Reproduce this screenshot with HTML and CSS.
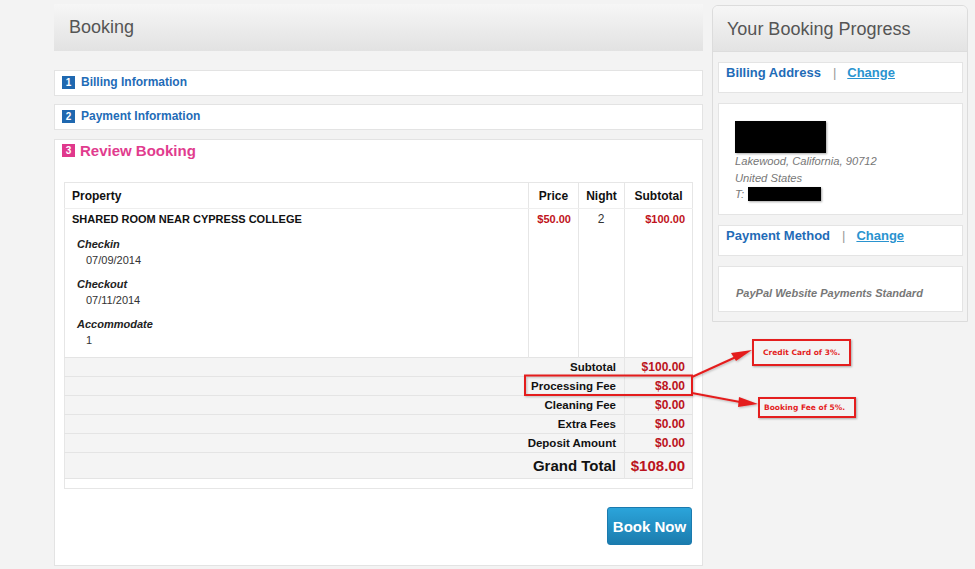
FILE: index.html
```html
<!DOCTYPE html>
<html>
<head>
<meta charset="utf-8">
<link rel="stylesheet" href="styles.css">
</head>
<body>
<div class="page">
  <main class="main">
    <div class="bar"><h1 class="bar-title">Booking</h1></div>
    <div class="step step-first"><span class="num">1</span>Billing Information</div>
    <div class="step"><span class="num">2</span>Payment Information</div>
    <section class="review">
      <div class="review-title"><span class="num num-pink">3</span>Review Booking</div>
      <table class="cart">
        <colgroup><col class="c1"><col class="c2"><col class="c3"><col class="c4"></colgroup>
        <thead>
          <tr><th class="th-left">Property</th><th>Price</th><th>Night</th><th>Subtotal</th></tr>
        </thead>
        <tbody>
          <tr class="item">
            <td class="prop">
              <div class="prop-name">SHARED ROOM NEAR CYPRESS COLLEGE</div>
              <dl class="details">
                <dt>Checkin</dt><dd>07/09/2014</dd>
                <dt>Checkout</dt><dd>07/11/2014</dd>
                <dt>Accommodate</dt><dd>1</dd>
              </dl>
            </td>
            <td class="money">$50.00</td>
            <td class="center">2</td>
            <td class="money">$100.00</td>
          </tr>
          <tr class="tot"><td colspan="3" class="tl">Subtotal</td><td class="tv">$100.00</td></tr>
          <tr class="tot"><td colspan="3" class="tl">Processing Fee</td><td class="tv">$8.00</td></tr>
          <tr class="tot"><td colspan="3" class="tl">Cleaning Fee</td><td class="tv">$0.00</td></tr>
          <tr class="tot"><td colspan="3" class="tl">Extra Fees</td><td class="tv">$0.00</td></tr>
          <tr class="tot"><td colspan="3" class="tl">Deposit Amount</td><td class="tv">$0.00</td></tr>
          <tr class="tot grand"><td colspan="3" class="tl">Grand Total</td><td class="tv">$108.00</td></tr>
          <tr class="empty"><td colspan="4"></td></tr>
        </tbody>
      </table>
      <div class="actions"><button class="book">Book Now</button></div>
    </section>
  </main>

  <aside class="side">
    <div class="side-bar"><h2 class="side-title">Your Booking Progress</h2></div>
    <div class="box box-head"><span class="bh">Billing Address</span><span class="sep">|</span><a class="change">Change</a></div>
    <div class="box box-addr">
      <div class="redact redact-name"></div>
      <div class="addr">Lakewood, California, 90712</div>
      <div class="addr">United States</div>
      <div class="addr">T: <span class="redact redact-phone"></span></div>
    </div>
    <div class="box box-head"><span class="bh">Payment Method</span><span class="sep">|</span><a class="change">Change</a></div>
    <div class="box box-pay">PayPal Website Payments Standard</div>
  </aside>
</div>

<svg class="overlay" width="975" height="569" viewBox="0 0 975 569">
  <defs>
    <filter id="sh" x="-20%" y="-20%" width="140%" height="140%">
      <feDropShadow dx="1" dy="1" stdDeviation="1" flood-color="#000" flood-opacity="0.25"/>
    </filter>
  </defs>
  <g filter="url(#sh)">
    <rect x="525" y="375.5" width="167" height="19.5" fill="none" stroke="#e41e1e" stroke-width="2"/>
    <line x1="692" y1="377" x2="736" y2="357" stroke="#e41e1e" stroke-width="2"/>
    <polygon points="752,350 731,353 736,361" fill="#e41e1e"/>
    <line x1="692" y1="393" x2="740" y2="402" stroke="#e41e1e" stroke-width="2"/>
    <polygon points="758,404 739,397 738,407" fill="#e41e1e"/>
  </g>
</svg>
<div class="note note-cc">Credit Card of 3%.</div>
<div class="note note-bf">Booking Fee of 5%.</div>
</body>
</html>
```

FILE: styles.css
```css
* { box-sizing: border-box; }
html, body { margin: 0; padding: 0; }
body {
  background: #f3f3f3;
  font-family: "Liberation Sans", Arial, sans-serif;
  color: #222;
  width: 975px;
  height: 569px;
  overflow: hidden;
  position: relative;
}
.page {
  display: flex;
  align-items: flex-start;
  gap: 9px;
  padding: 4px 0 0 54px;
}
.main { width: 649px; }

.bar {
  height: 47px;
  background: linear-gradient(#f6f6f6, #e2e2e2);
  padding-left: 15px;
}
.bar-title {
  margin: 0;
  font-weight: normal;
  font-size: 18px;
  line-height: 47px;
  color: #555;
}

.step {
  display: flex;
  align-items: center;
  height: 26px;
  margin-top: 8px;
  padding: 0 0 2px 7px;
  background: #fff;
  border: 1px solid #e3e3e3;
  font-size: 12px;
  font-weight: bold;
  color: #1f6cb7;
}
.step-first { margin-top: 19px; }
.num {
  display: inline-flex;
  align-items: center;
  justify-content: center;
  width: 13px;
  height: 13px;
  margin-right: 6px;
  background: #1f68b0;
  color: #fff;
  font-size: 10px;
  font-weight: bold;
}
.num-pink { background: #e0388c; margin-right: 5px; }

.review {
  margin-top: 9px;
  background: #fff;
  border: 1px solid #e3e3e3;
  padding: 0 10px 20px 9px;
}
.review-title {
  display: flex;
  align-items: center;
  height: 20px;
  margin: 0 0 0 -2px;
  font-size: 15px;
  font-weight: bold;
  color: #e13c8e;
}

.cart {
  margin-top: 22px;
  width: 628px;
  table-layout: fixed;
  border-collapse: collapse;
  border: 1px solid #e6e6e6;
  font-size: 12px;
}
.c1 { width: 464px; }
.c2 { width: 50px; }
.c3 { width: 46px; }
.c4 { width: 68px; }
.cart th {
  height: 26px;
  padding: 0 2px;
  font-weight: bold;
  color: #111;
  text-align: center;
  border-left: 1px solid #e6e6e6;
  border-bottom: 1px solid #eeeeee;
}
.cart th.th-left { text-align: left; padding-left: 7px; border-left: none; }
.item td {
  vertical-align: top;
  border-left: 1px solid #e6e6e6;
  padding: 4px 8px 8px 7px;
  line-height: 13px;
  font-size: 11px;
}
.item td.prop { border-left: none; }
.item td.money { text-align: right; color: #bf1320; font-weight: bold; padding-right: 7px; padding-left: 2px; }
.item td.center { text-align: center; color: #333; font-size: 12px; }
.prop-name { font-weight: bold; color: #111; font-size: 11px; }
.details { margin: 10px 0 0 5px; }
.details dt { font-style: italic; font-weight: bold; color: #222; line-height: 16px; margin-top: 7px; }
.details dt:first-child { margin-top: 0; }
.details dd { margin: 0 0 0 9px; line-height: 17px; color: #333; }

.tot td {
  height: 19px;
  padding: 0 8px 0 4px;
  background: #f4f4f4;
  border-top: 1px solid #e4e4e4;
  text-align: right;
  font-size: 11.5px;
  font-weight: bold;
  line-height: 18px;
}
.tot td.tl { color: #111; }
.tot td.tv { color: #bb1320; border-left: 1px solid #e6e6e6; padding-right: 7px; font-size: 12px; }
.tot.grand td { height: 26px; font-size: 15px; }
.tot.grand td.tv { font-size: 15px; }
.empty td { height: 10px; background: #fff; border-top: 1px solid #e4e4e4; padding: 0; }

.actions { display: flex; justify-content: flex-end; margin-top: 18px; }
.book {
  width: 85px;
  height: 38px;
  border: 1px solid #1b7aae;
  border-radius: 3px;
  background: linear-gradient(#2ba4da, #1b7cae);
  color: #fff;
  font-family: "Liberation Sans", Arial, sans-serif;
  font-size: 15px;
  font-weight: bold;
  padding: 0;
}

.side {
  width: 256px;
  margin-top: 1px;
  background: #f3f3f3;
  border: 1px solid #dcdcdc;
  border-radius: 6px 6px 0 0;
  padding-bottom: 9px;
  overflow: hidden;
}
.side-bar {
  height: 46px;
  background: linear-gradient(#f6f6f6, #e3e3e3);
  border-bottom: 1px solid #dddddd;
  padding-left: 14px;
}
.side-title {
  margin: 0;
  font-weight: normal;
  font-size: 18px;
  line-height: 46px;
  color: #555;
}
.box {
  margin: 10px 4px 0 5px;
  background: #fff;
  border: 1px solid #e4e4e4;
}
.box-head {
  height: 31px;
  padding: 2px 0 0 7px;
  font-size: 13px;
  font-weight: bold;
  line-height: 16px;
}
.bh { color: #1f6cb7; }
.sep { color: #999; font-weight: normal; margin: 0 11px 0 12px; }
.change { color: #2a93cf; text-decoration: underline; }
.box-addr {
  height: 112px;
  padding: 17px 0 0 16px;
}
.redact { background: #000; box-shadow: 1px 1px 2px rgba(0,0,0,0.35); }
.redact-name { width: 91px; height: 32px; }
.redact-phone { display: inline-block; width: 73px; height: 14px; vertical-align: -3px; margin-left: 1px; }
.addr {
  font-size: 11.2px;
  font-style: italic;
  color: #777;
  line-height: 16.5px;
}
.box-pay {
  height: 46px;
  padding: 19px 0 0 17px;
  font-size: 11px;
  font-style: italic;
  font-weight: bold;
  color: #777;
  line-height: 14px;
}

.overlay { position: absolute; left: 0; top: 0; pointer-events: none; }
.note {
  position: absolute;
  border: 2px solid #e41e1e;
  background: #f3f3f3;
  box-shadow: 1px 1px 2px rgba(0,0,0,0.3);
  color: #e41e1e;
  font-family: "DejaVu Sans", sans-serif;
  font-size: 7.5px;
  font-weight: bold;
  line-height: 12px;
}
.note-cc { left: 752px; top: 339px; width: 99px; height: 27px; padding: 6px 0 0 9px; }
.note-bf { left: 758px; top: 397px; width: 98px; height: 21px; padding: 3px 0 0 4px; }
```
